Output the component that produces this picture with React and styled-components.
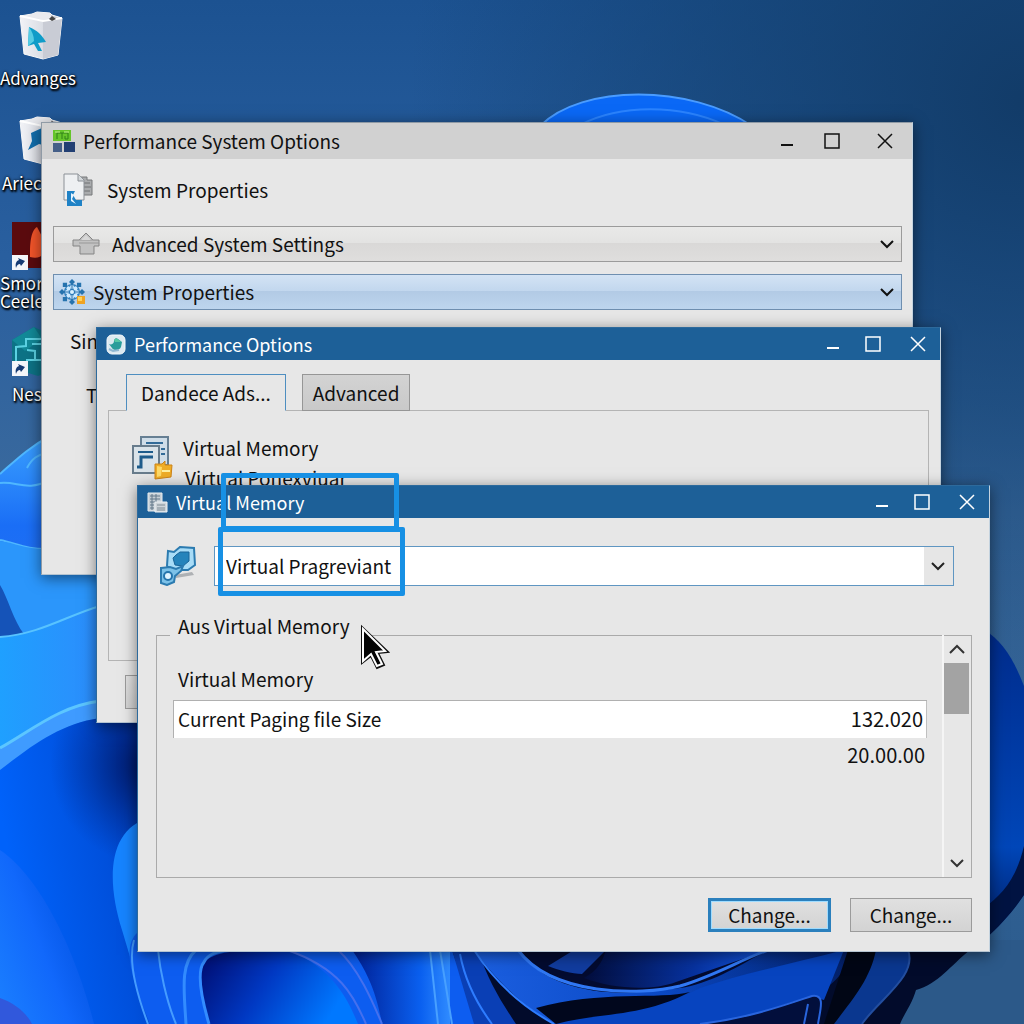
import React from "react";
import styled, { createGlobalStyle } from "styled-components";

const GlobalStyle = createGlobalStyle`
  * {
    box-sizing: border-box;
  }
  body {
    margin: 0;
    font-family: "Noto Sans CJK SC", "Noto Sans", sans-serif;
    font-size: 19px;
    line-height: 24px;
    color: #111;
  }
  button,
  select {
    font: inherit;
    color: inherit;
    padding: 0;
    margin: 0;
    border: none;
    background: none;
  }
`;

const Desktop = styled.main`
  position: relative;
  height: 100vh;
  overflow: hidden;
  background: #1d4f86;
`;

const Wallpaper = styled.svg`
  position: absolute;
  inset: 0;
  width: 100%;
  height: 100%;
`;

const Shortcuts = styled.nav`
  position: relative;
  display: grid;
  grid-template-rows: 105px 105px 106px 100px;
  width: 80px;
  padding-top: 10px;
`;

const Shortcut = styled.a`
  display: flex;
  flex-direction: column;
  align-items: flex-start;
  gap: 4px;
  color: #fff;
  font-size: 17px;
  line-height: ${(p) => (p.$tight ? "18px" : "28px")};
  text-decoration: none;
  white-space: pre-line;
  text-shadow: 0 0 3px #000, 1px 1px 2px #000, 1px 2px 2px #000;
  padding-left: ${(p) => p.$indent || 0}px;
  svg {
    flex: none;
    margin-left: ${(p) => p.$iconIndent || 0}px;
  }
`;

const Window = styled.section`
  position: absolute;
  display: flex;
  flex-direction: column;
  left: ${(p) => p.$left}px;
  right: ${(p) => p.$right}px;
  top: ${(p) => p.$top}px;
  min-height: ${(p) => p.$height}px;
  background: #e7e7e7;
  border: 1px solid ${(p) => (p.$active ? "#2d6a9c" : "#8f9aa5")};
  border-right-color: #c4d3df;
  border-bottom-color: #b4c3d0;
  box-shadow: 0 3px 14px rgba(0, 0, 0, 0.5);
`;

const TitleBar = styled.header`
  display: flex;
  align-items: center;
  height: ${(p) => (p.$active ? 32 : 36)}px;
  padding-left: ${(p) => (p.$active ? 9 : 11)}px;
  padding-right: ${(p) => (p.$active ? 0 : 1)}px;
  gap: 8px;
  color: ${(p) => (p.$active ? "#fff" : "#111")};
  background: ${(p) => (p.$active ? "#1d6098" : "#d1d1d1")};
`;

const Title = styled.h1`
  flex: 1;
  margin: 0;
  font-size: ${(p) => (p.$active ? 18 : 19)}px;
  font-weight: 400;
  white-space: nowrap;
`;

const Controls = styled.div`
  display: grid;
  align-self: stretch;
  grid-template-columns: ${(p) => (p.$active ? "32px 47px 44px" : "36px 54px 52px")};
`;

const ControlButton = styled.button`
  display: flex;
  align-items: center;
  justify-content: center;
`;

const PropertiesBody = styled.div`
  display: flex;
  flex-direction: column;
  padding: 14px 10px 0 11px;
`;

const Heading = styled.h2`
  display: flex;
  align-items: center;
  gap: 13px;
  height: 34px;
  margin: 0 0 19px;
  padding-left: 10px;
  font-size: 19px;
  font-weight: 400;
`;

const DropDown = styled.label`
  display: flex;
  align-items: center;
  height: 36px;
  margin-bottom: 12px;
  padding: 0 6px 0 ${(p) => (p.$blue ? 5 : 18)}px;
  gap: ${(p) => (p.$blue ? 6 : 12)}px;
  border: 1px solid ${(p) => (p.$blue ? "#6f8fb0" : "#9b9b9b")};
  background: ${(p) =>
    p.$blue
      ? "linear-gradient(#d3e3f4, #c2d7ee 46%, #b2cae5 47%, #bdd5ee)"
      : "linear-gradient(#e9e9e8, #e3e3e2 46%, #d9d8d7 47%, #dfdedd)"};
`;

const Select = styled.select`
  flex: 1;
  min-width: 0;
  height: 34px;
  line-height: 34px;
  appearance: none;
  outline: none;
`;

const SideText = styled.p`
  margin: ${(p) => p.$gap}px 0 0 ${(p) => p.$indent}px;
`;

const OptionsBody = styled.div`
  display: flex;
  flex-direction: column;
  flex: 1;
  padding: 14px 11px 13px;
`;

const Tabs = styled.div`
  display: flex;
  gap: 16px;
  padding-left: 18px;
`;

const Tab = styled.button`
  height: 37px;
  padding: 0 ${(p) => (p.$selected ? 14 : 10)}px;
  border: 1px solid ${(p) => (p.$selected ? "#4e8ec0" : "#969696")};
  background: linear-gradient(#d3d3d3, #c9c9c9);
  z-index: 1;
  ${(p) =>
    p.$selected &&
    `
    background: #e7e7e7;
    border-bottom-color: #e7e7e7;
  `}
`;

const TabPanel = styled.div`
  display: flex;
  align-items: flex-start;
  gap: 10px;
  height: 251px;
  margin-top: -1px;
  padding: 25px 23px;
  border: 1px solid #b4b4b4;
`;

const PanelLines = styled.div`
  display: flex;
  flex-direction: column;
  gap: 6px;
  span + span {
    padding-left: 2px;
  }
`;

const PushButton = styled.button`
  width: ${(p) => (p.$primary ? 123 : 122)}px;
  height: 34px;
  border: ${(p) => (p.$primary ? "3px solid #2b80bd" : "1px solid #9b9b9b")};
  background: linear-gradient(#e0e0e0, #d3d3d3);
  ${(p) => p.$primary && "box-shadow: inset 0 0 0 1px #9fdcff;"}
`;

const LowerButton = styled(PushButton)`
  margin: 14px 0 0 17px;
`;

const MemoryBody = styled.div`
  display: flex;
  flex-direction: column;
  flex: 1;
  padding: 28px 17px 18px 18px;
`;

const PickerRow = styled.div`
  display: flex;
  align-items: center;
  gap: 17px;
  padding: 0 18px 0 4px;
`;

const Picker = styled.label`
  display: flex;
  align-items: center;
  flex: 1;
  height: 40px;
  padding-left: 11px;
  border: 1px solid #5f96c2;
  background: #fff;
`;

const PickerArrow = styled.span`
  display: flex;
  align-items: center;
  justify-content: center;
  align-self: stretch;
  width: 29px;
  padding-right: 2px;
  background: #e6e6e6;
`;

const Group = styled.fieldset`
  display: flex;
  min-width: 0;
  margin: 28px 0 20px;
  padding: 0;
  border: 1px solid #aaa;
`;

const Legend = styled.legend`
  height: 42px;
  margin: 0 0 -21px 13px;
  padding: 0 14px 0 8px;
`;

const SizesArea = styled.div`
  flex: 1;
  padding: 23px 15px 0 16px;
`;

const Sizes = styled.table`
  width: 100%;
  border-collapse: collapse;
  text-align: left;
  th {
    height: 42px;
    padding: 0 5px;
    font-weight: 400;
  }
  td {
    height: 34px;
    padding: 0 2px;
  }
  td:last-child {
    font-size: 20px;
    text-align: right;
  }
`;

const CurrentRow = styled.tr`
  background: #fff;
  box-shadow: inset 1px 1px #b0b0b0, inset -1px 0 #c0c0c0;
  && td {
    height: 38px;
    padding: 0 4px 0 5px;
  }
`;

const ScrollBar = styled.div`
  display: flex;
  flex-direction: column;
  align-items: stretch;
  width: 29px;
  height: 242px;
  padding-right: 2px;
  border-left: 2px solid #f5f5f5;
`;

const ScrollButton = styled.button`
  display: flex;
  align-items: center;
  justify-content: center;
  height: 28px;
  &:last-child {
    margin-top: auto;
  }
`;

const ScrollThumb = styled.div`
  height: 51px;
  background: #a3a3a3;
`;

const Actions = styled.footer`
  display: flex;
  justify-content: flex-end;
  gap: 19px;
`;

const Highlight = styled.div`
  position: absolute;
  left: ${(p) => p.$left}px;
  top: ${(p) => p.$top}px;
  width: ${(p) => p.$width}px;
  height: ${(p) => p.$height}px;
  border: 5px solid #1790e4;
  border-radius: 2px;
  pointer-events: none;
`;

const Pointer = styled.svg`
  position: absolute;
  left: 360px;
  top: 624px;
`;

const Chevron = ({ up, size = 16, color = "#111", width = 2 }) => (
  <svg width={size} height={size} viewBox="0 0 16 16" fill="none" stroke={color} strokeWidth={width}>
    <path d={up ? "M1 12 8 5 15 12" : "M2 5 8 11 14 5"} />
  </svg>
);

const BinIcon = ({ flipped }) => (
  <svg width="44" height="50" viewBox="0 0 44 50">
    <defs>
      <linearGradient id="bin" x1="0" x2="1">
        <stop offset="0" stopColor="#f2f3f7" />
        <stop offset=".5" stopColor="#dcdfe6" />
        <stop offset="1" stopColor="#b9bcc8" />
      </linearGradient>
    </defs>
    <path d="M1 6 13 4 18 2 31 3 33 5 43 8 39 45 24 49 5 44Z" fill="url(#bin)" stroke="#fafafa" />
    <path d="M9 6 13 4 18 2 31 3 33 8 24 10Z" fill="#e9eaee" />
    <path d="M24 11v38l15-4 4-37Z" fill="#c9ccd5" />
    <path d="M1 6 24 11 43 8" fill="none" stroke="#fff" strokeWidth="2" />
    <path d="m30 9 3-3 4 3-4 2Z" fill="#444" />
    {flipped ? (
      <path d="m12 18 11-5 9 4v15l-12-3-11 6 4-9Z" fill="#126fae" />
    ) : (
      <>
        <path d="M10 17c8 3 13 8 17 15l-8 1 4 8h-4l-4-7-6 2Z" fill="#0f9cc8" />
        <path d="M10 17c3 4 5 9 5 14l-6 5Z" fill="#56cde4" />
      </>
    )}
  </svg>
);

const ShortcutArrow = ({ y }) => (
  <g transform={`translate(0 ${y})`}>
    <path d="M0 0h16v15H0Z" fill="#f5f7fa" />
    <path d="M4 13c-1-4 0-7 3-8l-1-2 7 3-4 5-1-2c-2 0-3 1-4 4Z" fill="#173c74" />
  </g>
);

const FlameIcon = () => (
  <svg width="48" height="50" viewBox="0 0 48 50">
    <path d="M0 2h48v46H0Z" fill="#5b0b0e" />
    <path d="M18 37c0-10 0-26 7-30 3 6 11 18 8 25-3 5-8 7-15 5Z" fill="#f4552a" />
    <ShortcutArrow y={35} />
  </svg>
);

const CubeIcon = () => (
  <svg width="48" height="50" viewBox="0 0 48 50">
    <path d="M0 14 22 1 48 13v28L26 50 0 42Z" fill="#0d7386" />
    <path d="M0 14 22 1l8 12L13 25Z" fill="#128998" />
    <path d="M4 35V21l10-1v-7h16M15 43v-9h8v-9l-8-1M20 18h12v16h-9" fill="none" stroke="#5cd2e3" strokeWidth="2" />
    <ShortcutArrow y={35} />
  </svg>
);

const TilesIcon = () => (
  <svg width="22" height="24" viewBox="0 0 22 24">
    <path d="M0 1h18v11H0Z" fill="#65c52a" />
    <path d="M4 10V4h5M9 10V4h6v6h-3V7" fill="none" stroke="#2f7f18" strokeWidth="1" />
    <path d="M2 3h5M11 3h5" stroke="#c4f28f" />
    <path d="M0 14h9v9H0Z" fill="#455f88" />
    <path d="M11 13h11v10H11Z" fill="#223f73" />
  </svg>
);

const DocumentsIcon = () => (
  <svg width="31" height="34" viewBox="0 0 31 34">
    <path d="M17 4h7v3h5v15H17Z" fill="#a9abad" stroke="#77797b" />
    <path d="M19 10h8M19 14h9M19 18h8" stroke="#6e7072" />
    <path d="M1 1h14l6 6v20H1Z" fill="#eef0f2" stroke="#8b9096" />
    <path d="M15 1v7h6" fill="#d2d6d9" stroke="#8b9096" />
    <path d="M4 18h8l-2 4 3 5h6v6H4Z" fill="#1f82c6" />
    <path d="m8 20 3 2-2 4 4 5-5-3Z" fill="#e8f5ff" />
  </svg>
);

const UpArrowIcon = () => (
  <svg width="28" height="24" viewBox="0 0 28 24" fill="#c2c2c2" stroke="#858585">
    <path d="m14 1 7 7h6v6h-5v8H8v-8H1V8h6Z" />
    <path d="M7 11h20M7 8h14" stroke="#989898" />
    <path d="m14 3 5 5H9Z" fill="#d8d8d8" stroke="none" />
  </svg>
);

const FlowerIcon = () => (
  <svg width="28" height="26" viewBox="0 0 28 26">
    <circle cx="13" cy="13" r="8" fill="#3583bf" />
    {[0, 45, 90, 135, 180, 225, 270, 315].map((turn) => (
      <g key={turn} transform={`rotate(${turn} 13 13)`}>
        <path d="M13 6 10 3 13 0 16 3Z" fill="#2673ae" />
        <circle cx="13" cy="8" r="2" fill="#cfeaff" />
      </g>
    ))}
    <path d="M13 5v16M5 13h16" stroke="#276fa9" />
    <circle cx="13" cy="13" r="2" fill="#d9f1ff" />
    <path d="M18 17h8v8h-8Z" fill="#efa323" />
    <path d="M19 18h4v4h-4Z" fill="#ffd35a" />
  </svg>
);

const GlobeIcon = () => (
  <svg width="20" height="21" viewBox="0 0 20 21">
    <rect x="1" y="1" width="18" height="19" rx="5" fill="#dce9f0" stroke="#f4f9fb" />
    <path d="M3 10c2 1 5 0 5-3 0-2 2-4 4-2l4 3-1 5c-2 4-7 4-9 1Z" fill="#2a9d9b" />
    <path d="M8 6c1-2 3-2 5 0l2 2H9Z" fill="#57c8a5" />
    <path d="m3 15 4 2 6-1" stroke="#8fb8d2" strokeWidth="2" fill="none" />
  </svg>
);

const StackedPagesIcon = () => (
  <svg width="41" height="44" viewBox="0 0 41 44">
    <path d="M9 1h27v28H9Z" fill="#cfdde8" stroke="#667f93" strokeWidth="2" />
    <path d="M14 7h17M29 13h4M29 18h4" stroke="#326b98" strokeWidth="2" />
    <path d="M1 10h26v27H1Z" fill="#dae3e9" stroke="#687c8c" strokeWidth="2" />
    <path d="M6 16h15" stroke="#1e5c8b" strokeWidth="2" />
    <path d="M5 31h4V21h12" fill="none" stroke="#1e5c8b" strokeWidth="3" />
    <path d="M23 28h7l3-3v4h7l-1 12-16 2Z" fill="#efad27" stroke="#cc8318" />
    <path d="m25 30 5 1-1 9-4 1Z" fill="#ffda68" />
    <path d="M30 35h8" stroke="#fff0a0" strokeWidth="2" />
  </svg>
);

const LedgerIcon = () => (
  <svg width="21" height="21" viewBox="0 0 21 21">
    <path d="M1 1h14v18H1Z" fill="#c5ced5" stroke="#e9edef" />
    <path d="M3 4h10M3 7h10M3 10h7M3 13h4M3 16h4M5 2v16M9 2v8" stroke="#62798a" />
    <path d="M8 10h12v10H8Z" fill="#cdd4d9" stroke="#eef2f5" />
    <path d="M10 13h8M10 16h8M10 18h8" stroke="#7f8c96" />
  </svg>
);

const DriveIcon = () => (
  <svg width="37" height="40" viewBox="0 0 37 40">
    <path d="m15 29 17-3 2 3-18 3Z" fill="#aeb1b4" />
    <path d="M8 5 14 6 20 1 34 2 35 19 28 24 18 24 14 28 7 20Z" fill="#a8dcf7" stroke="#2c7bb0" strokeWidth="2" />
    <path d="m13 12 3-3 4-3h9l0 9-6 5-8-1Z" fill="#2583bb" stroke="#1a6498" />
    <path d="m1 22 9-1 6 2 7-3-2 5-6 5-1 6-7 3-6-2Z" fill="#7cc1e8" stroke="#2c7bb0" strokeWidth="2" />
    <circle cx="8" cy="30" r="4" fill="#dff3ff" stroke="#2574ac" strokeWidth="2" />
  </svg>
);

const WindowControls = ({ active }) => (
  <Controls $active={active}>
    <ControlButton type="button" aria-label="Minimize">
      <svg width="16" height="16" viewBox="0 0 16 16" stroke="currentColor" strokeWidth="2">
        <path d="M2 12h12" />
      </svg>
    </ControlButton>
    <ControlButton type="button" aria-label="Maximize">
      <svg width="16" height="16" viewBox="0 0 16 16" fill="none" stroke="currentColor" strokeWidth="1.500">
        <path d="M1 1h14v14H1Z" />
      </svg>
    </ControlButton>
    <ControlButton type="button" aria-label="Close">
      <svg width="16" height="16" viewBox="0 0 16 16" stroke="currentColor" strokeWidth="1.500">
        <path d="m1 1 14 14M15 1 1 15" />
      </svg>
    </ControlButton>
  </Controls>
);

const Bloom = () => (
  <Wallpaper viewBox="0 0 1024 1024" preserveAspectRatio="none" aria-hidden="true">
    <defs>
      <linearGradient id="sky" x1="0" y1="0" x2="0" y2="1">
        <stop offset="0" stopColor="#1c5291" />
        <stop offset=".25" stopColor="#295f9f" />
        <stop offset=".5" stopColor="#3b6a9d" />
        <stop offset="1" stopColor="#2b5b8d" />
      </linearGradient>
      <radialGradient id="night" cx="1" cy=".1" r=".6">
        <stop offset="0" stopColor="#113a66" stopOpacity=".95" />
        <stop offset=".5" stopColor="#13406f" stopOpacity=".6" />
        <stop offset="1" stopColor="#123f6f" stopOpacity="0" />
      </radialGradient>
      <linearGradient id="petalA" x1="0" y1="0" x2="0" y2="1">
        <stop offset="0" stopColor="#3aa0ff" />
        <stop offset=".4" stopColor="#1a6ef6" />
        <stop offset="1" stopColor="#2b70ee" />
      </linearGradient>
      <linearGradient id="petalB" x1="0" y1="0" x2="1" y2="0">
        <stop offset="0" stopColor="#1fa0ff" />
        <stop offset="1" stopColor="#3185fb" />
      </linearGradient>
      <linearGradient id="petalC" x1="0" y1=".3" x2="1" y2="0">
        <stop offset="0" stopColor="#0062fa" />
        <stop offset=".5" stopColor="#0050dc" />
        <stop offset="1" stopColor="#0030a0" />
      </linearGradient>
      <radialGradient id="shade" gradientUnits="userSpaceOnUse" cx="150" cy="765" r="100">
        <stop offset="0" stopColor="#001256" />
        <stop offset="1" stopColor="#00298f" stopOpacity="0" />
      </radialGradient>
      <linearGradient id="glow" x1="0" y1="1" x2="1" y2=".3">
        <stop offset="0" stopColor="#1b80ff" />
        <stop offset=".5" stopColor="#1168fb" />
        <stop offset="1" stopColor="#0a50dc" stopOpacity=".2" />
      </linearGradient>
      <linearGradient id="arch" x1="0" y1="0" x2="1" y2=".3">
        <stop offset="0" stopColor="#000a6c" />
        <stop offset=".5" stopColor="#0038c2" />
        <stop offset="1" stopColor="#0078ff" />
      </linearGradient>
      <linearGradient id="fold" x1="0" y1="0" x2="1" y2="0">
        <stop offset="0" stopColor="#001f94" />
        <stop offset=".7" stopColor="#0a60f0" />
        <stop offset="1" stopColor="#2f8bff" />
      </linearGradient>
      <linearGradient id="lobe" x1="0" y1="0" x2="0" y2="1">
        <stop offset="0" stopColor="#002c8c" />
        <stop offset=".7" stopColor="#0046b8" />
        <stop offset="1" stopColor="#001e66" />
      </linearGradient>
      <linearGradient id="sweep" x1="0" y1="0" x2="1" y2="0">
        <stop offset="0" stopColor="#1b5fe0" />
        <stop offset=".5" stopColor="#0a48c4" />
        <stop offset="1" stopColor="#031f66" />
      </linearGradient>
      <linearGradient id="inner" x1="0" y1="0" x2="1" y2="0">
        <stop offset="0" stopColor="#020d3c" />
        <stop offset=".6" stopColor="#07329f" />
        <stop offset="1" stopColor="#1258e6" />
      </linearGradient>
    </defs>
    <path d="M0 0h1024v1024H0Z" fill="url(#sky)" />
    <path d="M0 0h1024v1024H0Z" fill="url(#night)" />
    <path d="M540 126C582 84 690 84 752 126V160H540Z" fill="#0a68f6" />
    <path d="M540 126C582 84 690 84 752 126" fill="none" stroke="#4a9cff" strokeWidth="2" />
    <path d="M580 125C620 104 680 104 725 125" fill="none" stroke="#2b84ff" strokeWidth="2" />

    <path d="M0 474C16 460 28 448 50 436V660H0Z" fill="url(#petalA)" />
    <path d="M0 474C16 460 28 448 50 436M27 468C32 458 38 455 46 453M0 483C18 481 26 492 50 480M0 540C16 543 26 550 50 549" fill="none" stroke="#4fb7ff" strokeWidth="2" />
    <path d="M0 541C16 543 26 550 50 549L138 570V640L0 660Z" fill="#2b96fb" />
    <path d="M0 585C8 598 14 622 24 634L0 640Z" fill="#1553b8" />
    <path d="M0 637C40 634 66 616 100 606L138 600V740L0 780Z" fill="url(#petalB)" />
    <path d="M0 637C40 634 66 616 100 606" fill="none" stroke="#58c3ff" strokeWidth="2" />
    <path d="M0 748C32 730 60 706 100 701L138 700V730L0 790Z" fill="#3f9bff" />
    <path d="M0 748C32 730 60 706 100 701" fill="none" stroke="#5cc6ff" strokeWidth="3" />
    <path d="M0 770C34 744 60 724 100 718H180V1024H0Z" fill="url(#petalC)" />
    <path d="M0 770C34 744 60 724 100 718H180V1024H0Z" fill="url(#shade)" />
    <path d="M0 850C44 880 78 960 94 1024H0Z" fill="url(#glow)" />
    <path d="M0 998C14 1003 26 1012 32 1024H0Z" fill="#3158dc" />
    <path d="M150 818C108 828 106 880 122 930L150 1024H210V818Z" fill="#1684ff" />
    <path d="M138 932C122 946 130 976 150 1024H580V930Z" fill="#0d5df0" />
    <path d="M134 940C128 960 136 992 148 1024M158 950C160 970 166 1000 176 1024" fill="none" stroke="#459cff" strokeWidth="2" />
    <path d="M209 1024C202 1000 196 972 204 962C216 952 230 950 290 950C334 970 348 1000 358 1024Z" fill="url(#arch)" />
    <path d="M209 1024C202 1000 196 972 204 962C208 954 216 952 226 950M186 1024C184 990 180 964 196 950" fill="none" stroke="#338cff" strokeWidth="3" />
    <path d="M352 950H450V1024H382C376 990 366 970 352 950Z" fill="url(#fold)" />
    <path d="M287 950C340 968 354 996 366 1024M338 950C358 968 372 1000 382 1024" fill="none" stroke="#4470ee" strokeWidth="2" />
    <path d="M430 950 438 1024M440 950 452 1024" stroke="#48a0ff" strokeWidth="2" />
    <path d="M452 950H1010V1024H484C476 998 460 976 452 950Z" fill="#020b2b" />
    <path d="M452 950H478C488 980 500 1000 516 1024H474Z" fill="#0a3fb5" />
    <path d="M474 950H518C552 1000 640 998 682 984C720 978 740 962 768 950H850C846 990 800 1002 760 1012L700 1024H554C518 1004 492 974 474 950Z" fill="url(#sweep)" />
    <path d="M518 950H768C742 964 710 984 680 988C620 996 556 990 518 950Z" fill="#030b30" />
    <path d="M574 950H606L582 974C572 974 558 970 548 966Z" fill="#113c9f" />
    <path d="M606 950C600 970 590 974 584 978C610 988 650 992 676 982L768 950Z" fill="url(#inner)" />
    <path d="M518 950C552 996 640 996 680 986C714 976 740 960 768 950" fill="none" stroke="#3078f4" strokeWidth="3" />
    <path d="M552 1024C590 1000 650 1016 700 988C740 974 790 964 844 950L824 1000C794 990 760 1024 700 1024Z" fill="#0744bf" />
    <path d="M536 1008C600 990 660 1000 690 992C640 1018 600 1012 556 1024Z" fill="#01071d" />
    <path d="M474 950C492 978 518 1004 554 1024M460 954C466 986 480 1008 492 1024" fill="none" stroke="#2e7dff" strokeWidth="2" />
    <path d="M700 1024C750 1018 788 1006 812 996C826 994 820 1010 818 1024Z" fill="#020f3c" />
    <path d="M700 1024C750 1018 788 1004 812 996C826 994 820 1010 818 1024M804 1024 808 1004" fill="none" stroke="#2965dd" strokeWidth="2" />
    <path d="M848 950 824 1024H864L890 950Z" fill="#010615" />
    <path d="M876 950H908C918 976 878 1000 862 1024H834C852 1000 870 980 876 950Z" fill="#0a378f" />
    <path d="M908 950C918 976 878 1000 862 1024" fill="none" stroke="#234e9f" strokeWidth="2" />
    <path d="M970 950C950 966 938 984 916 990C912 1004 904 1014 900 1024H1024V940H980Z" fill="#2c5989" />
    <path d="M984 630C1002 640 1014 660 1024 686V895C1012 912 1002 924 984 940Z" fill="url(#lobe)" />
    <path d="M1024 846C1016 880 1002 894 984 908V940C1002 924 1014 910 1024 895Z" fill="#011342" />
  </Wallpaper>
);

const App = () => (
  <Desktop>
    <GlobalStyle />
    <Bloom />
    <Shortcuts aria-label="Desktop">
      <Shortcut href="#advanges" $iconIndent={19}>
        <BinIcon />
        Advanges
      </Shortcut>
      <Shortcut href="#ariec" $indent={2} $iconIndent={17}>
        <BinIcon flipped />
        Ariec
      </Shortcut>
      <Shortcut href="#smor" $tight $iconIndent={12}>
        <FlameIcon />
        {"Smor\nCeele"}
      </Shortcut>
      <Shortcut href="#nes" $indent={12}>
        <CubeIcon />
        Nes
      </Shortcut>
    </Shortcuts>

    <Window $left={41} $right={111} $top={122} $height={453}>
      <TitleBar>
        <TilesIcon />
        <Title>Performance System Options</Title>
        <WindowControls />
      </TitleBar>
      <PropertiesBody>
        <Heading>
          <DocumentsIcon />
          System Properties
        </Heading>
        <DropDown>
          <UpArrowIcon />
          <Select aria-label="Settings">
            <option>Advanced System Settings</option>
          </Select>
          <Chevron />
        </DropDown>
        <DropDown $blue>
          <FlowerIcon />
          <Select aria-label="Properties">
            <option>System Properties</option>
          </Select>
          <Chevron />
        </DropDown>
        <SideText $gap={7} $indent={17}>Sin</SideText>
        <SideText $gap={30} $indent={33}>T</SideText>
      </PropertiesBody>
    </Window>

    <Window $active $left={96} $right={83} $top={327} $height={396}>
      <TitleBar $active>
        <GlobeIcon />
        <Title $active>Performance Options</Title>
        <WindowControls active />
      </TitleBar>
      <OptionsBody>
        <Tabs role="tablist">
          <Tab type="button" role="tab" aria-selected="true" $selected>
            Dandece Ads...
          </Tab>
          <Tab type="button" role="tab" aria-selected="false">
            Advanced
          </Tab>
        </Tabs>
        <TabPanel role="tabpanel">
          <StackedPagesIcon />
          <PanelLines>
            <span>Virtual Memory</span>
            <span>Virtual Ponexviuar</span>
          </PanelLines>
        </TabPanel>
        <LowerButton type="button" aria-label="Apply" />
      </OptionsBody>
    </Window>

    <Window $active $left={137} $right={34} $top={485} $height={467}>
      <TitleBar $active>
        <LedgerIcon />
        <Title $active>Virtual Memory</Title>
        <WindowControls active />
      </TitleBar>
      <MemoryBody>
        <PickerRow>
          <DriveIcon />
          <Picker>
            <Select aria-label="Drive">
              <option>Virtual Pragreviant</option>
            </Select>
            <PickerArrow>
              <Chevron color="#222" />
            </PickerArrow>
          </Picker>
        </PickerRow>
        <Group>
          <Legend>Aus Virtual Memory</Legend>
          <SizesArea>
            <Sizes>
              <thead>
                <tr>
                  <th colSpan="2">Virtual Memory</th>
                </tr>
              </thead>
              <tbody>
                <CurrentRow>
                  <td>Current Paging file Size</td>
                  <td>132.020</td>
                </CurrentRow>
                <tr>
                  <td />
                  <td>20.00.00</td>
                </tr>
              </tbody>
            </Sizes>
          </SizesArea>
          <ScrollBar>
            <ScrollButton type="button" aria-label="Scroll up">
              <Chevron up color="#333" />
            </ScrollButton>
            <ScrollThumb />
            <ScrollButton type="button" aria-label="Scroll down">
              <Chevron color="#333" />
            </ScrollButton>
          </ScrollBar>
        </Group>
        <Actions>
          <PushButton type="button" $primary>
            Change...
          </PushButton>
          <PushButton type="button">Change...</PushButton>
        </Actions>
      </MemoryBody>
    </Window>

    <Highlight $left={221} $top={473} $width={178} $height={58} />
    <Highlight $left={218} $top={527} $width={187} $height={69} />
    <Pointer width="30" height="46" viewBox="0 0 30 46">
      <path d="M2 3v36l9-7 6 12 7-3-6-12 10-1Z" fill="#050505" stroke="#111" strokeWidth="2" />
      <path d="M3 5v32l8-7 6 12 5-2-6-12 9-1Z" fill="#050505" stroke="#fff" strokeWidth="2" />
    </Pointer>
  </Desktop>
);

export default App;
